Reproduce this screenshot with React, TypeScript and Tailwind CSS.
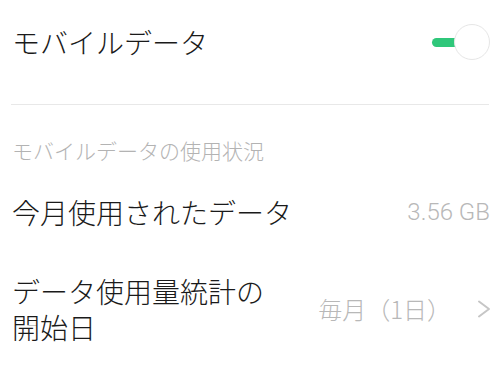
const Toggle = () => (
  <div className="relative h-[36px] w-[58px]">
    <div className="absolute left-0 top-[14px] h-[9px] w-[38px] rounded-full bg-[#2fc77a]" />
    <div className="absolute right-0 top-0 h-[36px] w-[36px] rounded-full border border-[#e6e6e6] bg-white" />
  </div>
);

const Chevron = () => (
  <svg width="14" height="18" viewBox="0 0 14 18" fill="none">
    <polyline
      points="2,1.5 12,9 2,16.5"
      stroke="#c6c6c6"
      strokeWidth="2"
      strokeLinecap="round"
      strokeLinejoin="round"
    />
  </svg>
);

export default function App() {
  return (
    <div
      className="h-[374px] w-[500px] overflow-hidden bg-white font-light text-[#1a1a1a]"
      style={{ fontFamily: '"Noto Sans CJK JP", Roboto, sans-serif' }}
    >
      <div className="flex h-[84px] items-center justify-between pl-[12px] pr-[10px]">
        <span className="text-[28px] leading-none">モバイルデータ</span>
        <Toggle />
      </div>
      <div className="mx-[11px] mt-[20px] h-px bg-[#e8e8e8]" />

      <div className="flex h-[90px] items-center pl-[12px]">
        <span className="text-[21px] leading-none text-[#b3b3b3]">モバイルデータの使用状況</span>
      </div>

      <div className="flex h-[34px] items-center justify-between pl-[12px] pr-[10px]">
        <span className="text-[28px] leading-none">今月使用されたデータ</span>
        <span className="font-['Roboto'] text-[24px] leading-none text-[#b8b8b8]">3.56 GB</span>
      </div>

      <div className="flex items-center justify-between pl-[12px] pr-[9px] pt-[44px]">
        <div className="flex flex-col text-[28px] leading-[36px]">
          <span>データ使用量統計の</span>
          <span>開始日</span>
        </div>
        <div className="flex items-center gap-[26px] text-[24px] leading-none text-[#b8b8b8]">
          <span>毎月（1日）</span>
          <Chevron />
        </div>
      </div>
    </div>
  );
}
